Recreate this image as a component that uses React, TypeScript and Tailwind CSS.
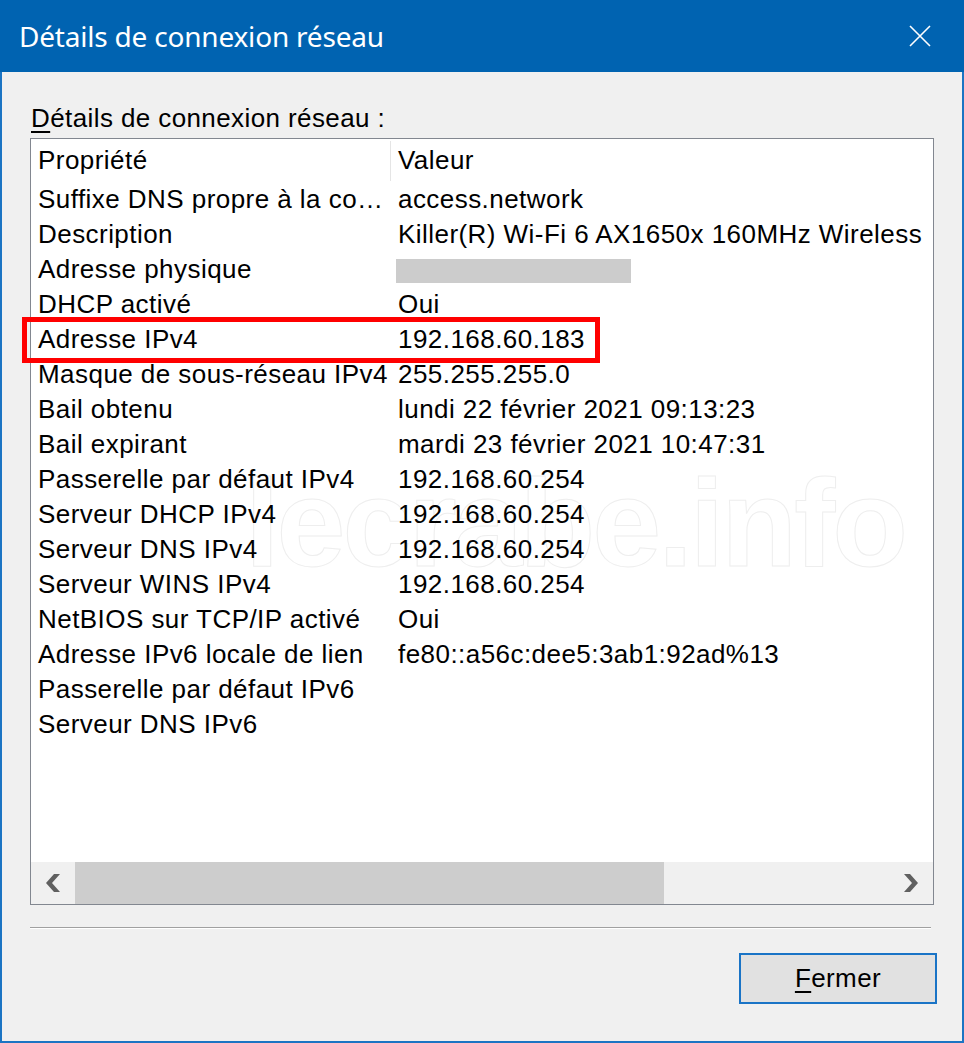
const FONT = "font-['Liberation_Sans',Arial,sans-serif]";

type Row = { name: string; value?: string; redacted?: boolean; marked?: boolean };

const rows: Row[] = [
  { name: 'Suffixe DNS propre à la co…', value: 'access.network' },
  { name: 'Description', value: 'Killer(R) Wi-Fi 6 AX1650x 160MHz Wireless' },
  { name: 'Adresse physique', redacted: true },
  { name: 'DHCP activé', value: 'Oui' },
  { name: 'Adresse IPv4', value: '192.168.60.183', marked: true },
  { name: 'Masque de sous-réseau IPv4', value: '255.255.255.0' },
  { name: 'Bail obtenu', value: 'lundi 22 février 2021 09:13:23' },
  { name: 'Bail expirant', value: 'mardi 23 février 2021 10:47:31' },
  { name: 'Passerelle par défaut IPv4', value: '192.168.60.254' },
  { name: 'Serveur DHCP IPv4', value: '192.168.60.254' },
  { name: 'Serveur DNS IPv4', value: '192.168.60.254' },
  { name: 'Serveur WINS IPv4', value: '192.168.60.254' },
  { name: 'NetBIOS sur TCP/IP activé', value: 'Oui' },
  { name: 'Adresse IPv6 locale de lien', value: 'fe80::a56c:dee5:3ab1:92ad%13' },
  { name: 'Passerelle par défaut IPv6' },
  { name: 'Serveur DNS IPv6' },
];

function Chevron({ dir }: { dir: 'left' | 'right' }) {
  return (
    <svg width="16" height="18" viewBox="0 0 16 18" className={dir === 'right' ? 'rotate-180' : ''}>
      <polygon points="9,0 15,0 7,9 15,18 9,18 1,9" fill="#606060" />
    </svg>
  );
}

export default function App() {
  return (
    <div className={`w-[964px] h-[1043px] flex flex-col bg-[#1b74c3] ${FONT} text-black`}>
      {/* Title bar */}
      <div className="h-[72px] shrink-0 bg-[#0063b1] flex items-center justify-between pl-[19px] pr-[33px]">
        <span className="text-white text-[28px] font-['Noto_Sans',sans-serif] tracking-[-0.2px]">
          Détails de connexion réseau
        </span>
        <svg width="22" height="22" viewBox="0 0 22 22">
          <path d="M1 1 L21 21 M21 1 L1 21" stroke="white" strokeWidth="1.6" />
        </svg>
      </div>

      {/* Dialog body */}
      <div className="flex-1 mx-[2px] mb-[2px] bg-[#f0f0f0] flex flex-col">
        <div className="mt-[31px] ml-[29px] h-[30px] leading-[30px] text-[26px] tracking-[0.4px]">
          <span className="underline underline-offset-[4px]">D</span>étails de connexion réseau :
        </div>

        {/* List view */}
        <div className="relative mt-[5px] ml-[28px] w-[904px] h-[767px] border border-[#828790] bg-white flex flex-col text-[26px] tracking-[0.45px]">
          {/* faint watermark */}
          <div className="absolute inset-0 overflow-hidden pointer-events-none select-none">
            <div className="absolute left-[214px] top-[322px] text-[124px] leading-none font-bold tracking-[-3px] text-white [-webkit-text-stroke:1px_#eeeeee]">
              lecrabe.info
            </div>
          </div>

          <div className="relative flex-1">
            <div className="h-[43px] flex items-center">
              <div className="w-[360px] h-[40px] pl-[7px] flex items-center border-r border-[#e5e5e5]">Propriété</div>
              <div className="pl-[7px]">Valeur</div>
            </div>
            {rows.map((r) => (
              <div key={r.name} className="relative h-[35px] flex items-center">
                {r.marked && (
                  <div className="absolute left-[-9px] top-[-5px] w-[578px] h-[46px] border-[5px] border-[#ff0000]" />
                )}
                <div className="w-[360px] pl-[7px] whitespace-nowrap overflow-hidden">{r.name}</div>
                <div className="w-[542px] pl-[7px] whitespace-nowrap overflow-hidden">
                  {r.redacted ? <div className="w-[235px] h-[24px] bg-[#cccccc] -ml-[2px] mt-[2px]" /> : r.value}
                </div>
              </div>
            ))}
          </div>

          {/* Horizontal scrollbar */}
          <div className="relative h-[42px] shrink-0 flex bg-[#f0f0f0]">
            <div className="w-[44px] flex items-center justify-center">
              <Chevron dir="left" />
            </div>
            <div className="w-[589px] bg-[#cdcdcd]" />
            <div className="flex-1" />
            <div className="w-[44px] flex items-center justify-center">
              <Chevron dir="right" />
            </div>
          </div>
        </div>

        <div className="mt-[22px] ml-[28px] w-[901px] h-px bg-[#a0a0a0]" />
        <div className="ml-[28px] w-[901px] h-px bg-white" />

        <div className="mt-[24px] flex justify-end pr-[25px]">
          <button className="w-[198px] h-[51px] border-2 border-[#1a74c6] bg-[#e1e1e1] text-[26px] tracking-[0.4px] flex items-center justify-center">
            <span>
              <span className="underline underline-offset-[4px]">F</span>ermer
            </span>
          </button>
        </div>
      </div>
    </div>
  );
}
